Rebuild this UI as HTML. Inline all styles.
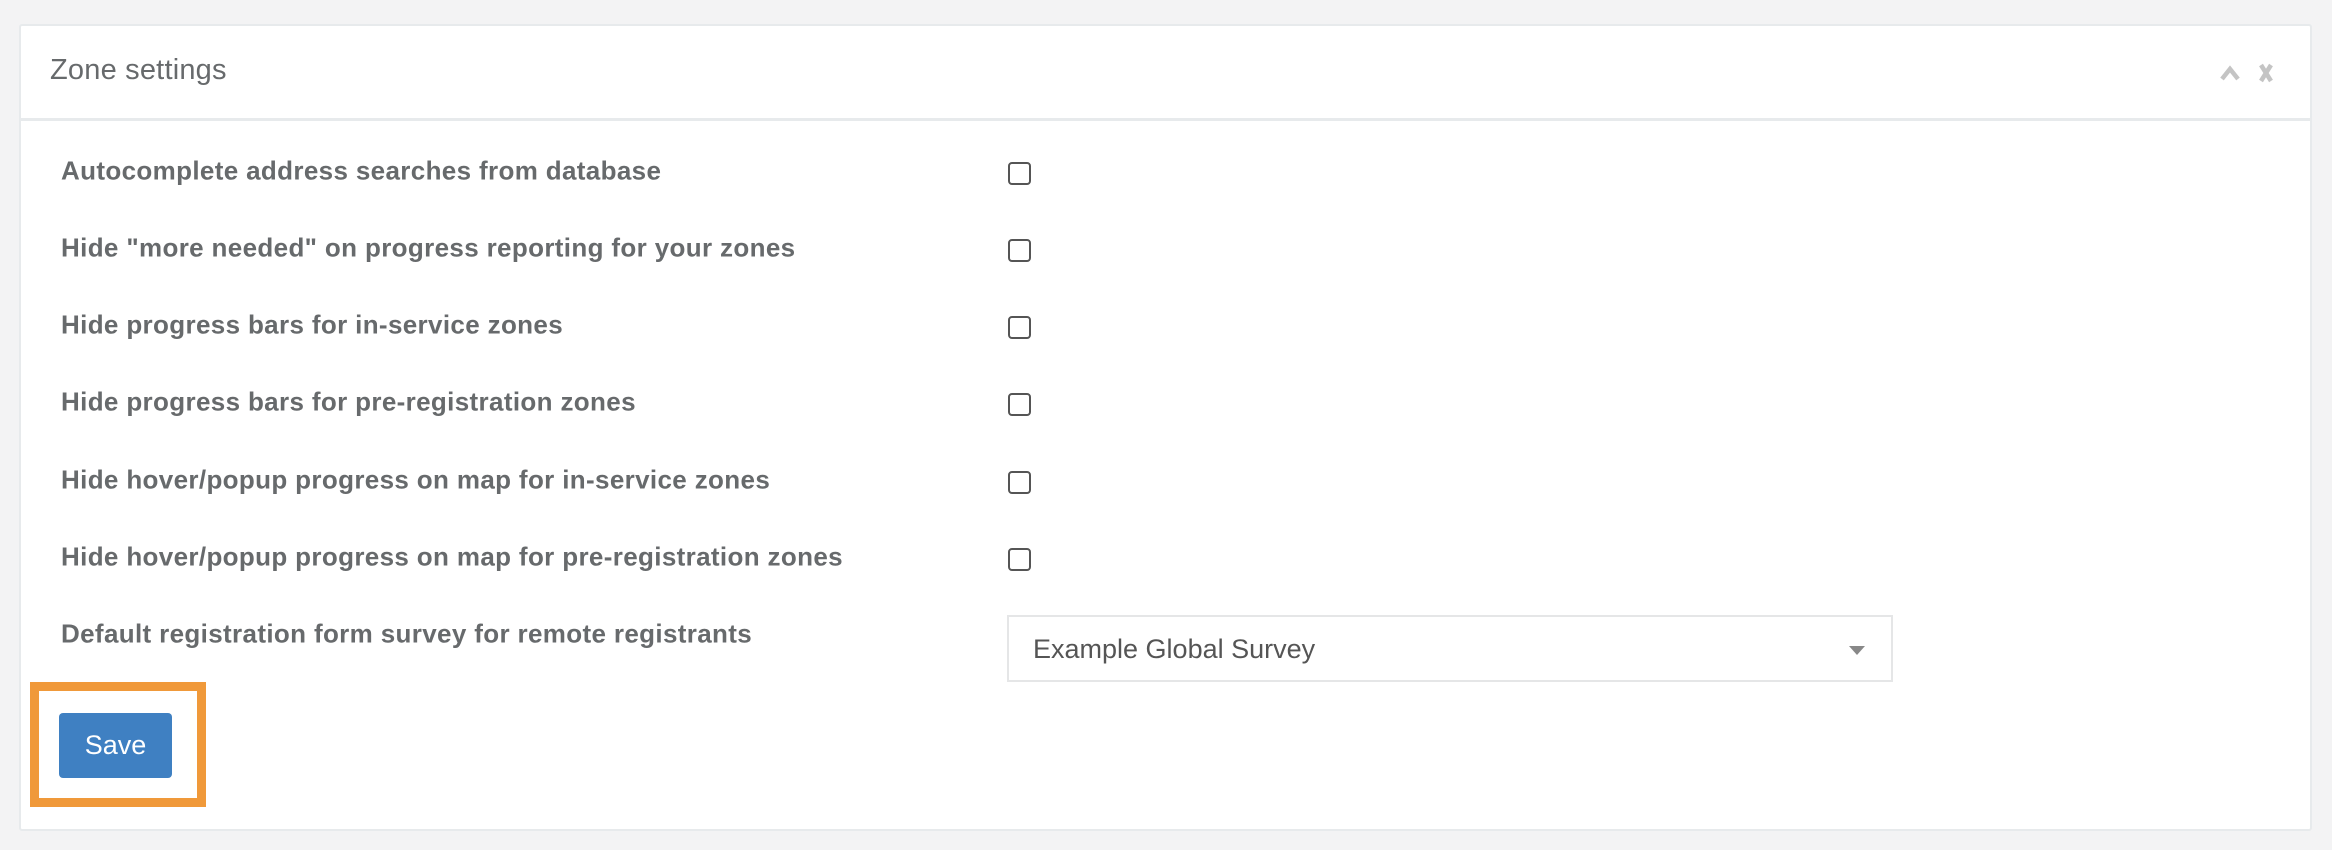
<!DOCTYPE html>
<html><head><meta charset="utf-8"><style>
*{box-sizing:border-box;margin:0;padding:0}
body{width:2332px;height:850px;background:#f3f3f4;font-family:"Liberation Sans",sans-serif;position:relative;overflow:hidden;color:#676a6c}
.panel{position:absolute;left:19px;top:24px;width:2293px;height:807px;background:#fff;border:2px solid #e7eaec;border-radius:3px}
.hdr{position:absolute;left:0;top:0;right:0;height:95px;border-bottom:3px solid #e7eaec}
.title{position:absolute;left:29px;top:28px;font-size:29px;color:#676a6c;letter-spacing:0.2px}
.lbl{position:absolute;left:40px;font-size:26px;letter-spacing:0.35px;font-weight:bold;color:#676a6c;transform:translateY(-50%);white-space:nowrap}
.cb{position:absolute;left:987px;width:23px;height:23px;border:2px solid #555;border-radius:4px;background:#fff}
.sel{position:absolute;left:986px;top:589px;width:886px;height:67px;border:2px solid #e5e6e7;background:#fff}
.sel span{position:absolute;left:24px;top:17px;font-size:27px;color:#555}
.sel i{position:absolute;right:26px;top:29px;border-left:8px solid transparent;border-right:8px solid transparent;border-top:9px solid #888}
.orange{position:absolute;left:9px;top:656px;width:176px;height:125px;border:9px solid #f0993a}
.btn{position:absolute;left:38px;top:687px;width:113px;height:65px;background:#3f80c2;border-radius:4px;color:#fff;font-size:27px;text-align:center;line-height:65px}
</style></head><body>
<div class="panel">
 <div class="hdr">
  <div class="title">Zone settings</div>
  <svg style="position:absolute;left:2197px;top:33px" width="60" height="26"><path d="M4 20 L12 10 L20 20" stroke="#c4c4c4" stroke-width="4.5" fill="none"/><path d="M43 6 L53 22 M53 6 L43 22" stroke="#c4c4c4" stroke-width="4.5"/></svg>
 </div>
 <div class="lbl" style="top:145px">Autocomplete address searches from database</div>
 <div class="lbl" style="top:222px">Hide "more needed" on progress reporting for your zones</div>
 <div class="lbl" style="top:299px">Hide progress bars for in-service zones</div>
 <div class="lbl" style="top:376px">Hide progress bars for pre-registration zones</div>
 <div class="lbl" style="top:454px">Hide hover/popup progress on map for in-service zones</div>
 <div class="lbl" style="top:531px">Hide hover/popup progress on map for pre-registration zones</div>
 <div class="lbl" style="top:608px">Default registration form survey for remote registrants</div>
 <div class="cb" style="top:136px"></div>
 <div class="cb" style="top:213px"></div>
 <div class="cb" style="top:290px"></div>
 <div class="cb" style="top:367px"></div>
 <div class="cb" style="top:445px"></div>
 <div class="cb" style="top:522px"></div>
 <div class="sel"><span>Example Global Survey</span><i></i></div>
 <div class="orange"></div>
 <div class="btn">Save</div>
</div>
</body></html>
